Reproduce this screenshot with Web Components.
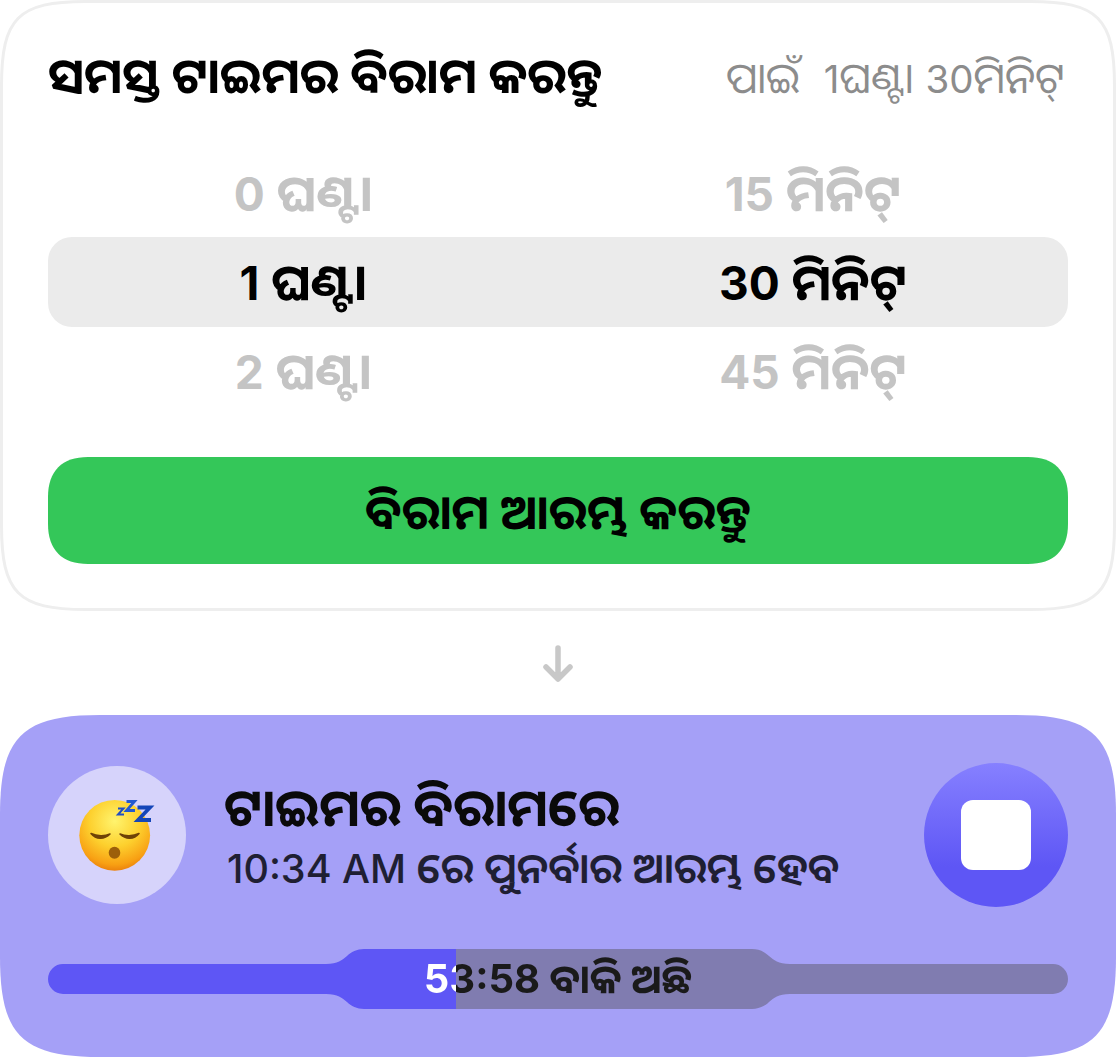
<!DOCTYPE html>
<html lang="or">
<head>
<meta charset="utf-8">
<title>ବିରାମ</title>
<style>
  html, body { margin: 0; background: #fff; }
  body {
    width: 1116px;
    font-family: Inter, "Noto Sans Oriya", "Noto Sans", sans-serif;
    color: #000;
  }
  pause-page { display: block; }
</style>
</head>
<body>
<pause-page></pause-page>

<script>
// one row of the hour / minute picker
class PickerRow extends HTMLElement {
  constructor () {
    super();
    const root = this.attachShadow({ mode: 'open' });
    root.innerHTML = `
    <style>
      :host { display: grid; grid-template-columns: 510px 510px; height: 88px; align-items: center; border-radius: 24px;
        font-size: 50.500px; font-weight: 700; color: #c4c4c4; text-align: center; line-height: 88px; }
      :host([selected]) { background: #ebebeb; color: #000; height: 90px; line-height: 90px; }
    </style>
    <div><slot name="hours"></slot></div>
    <div><slot name="minutes"></slot></div>`;
  }
}
customElements.define('picker-row', PickerRow);

// top card: title, picker and start button
class PauseCard extends HTMLElement {
  constructor () {
    super();
    const root = this.attachShadow({ mode: 'open' });
    root.innerHTML = `
    <style>
      :host { display: block; position: relative; box-sizing: border-box; height: 611px; padding: 44px 48px 0; }
      .edge { position: absolute; inset: 0; display: block; }
      header { position: relative; display: flex; justify-content: space-between; align-items: center; height: 64px; margin-bottom: 41px; }
      h1 { margin: 0; font-size: 49px; font-weight: 700; line-height: 64px; }
      .for { font-size: 42.500px; font-weight: 400; color: #8c8c8c; line-height: 64px; padding: 4px 3px 0 0; white-space: pre; }
      .for b { font-size: 38.500px; font-weight: 400; }
      .wheel { position: relative; display: flex; flex-direction: column; margin-bottom: 42px; }
      .wheel b { font-size: 46px; font-weight: 700; }
      button { position: relative; display: block; width: 1020px; height: 107px; border: 0; background: #34c759; color: #000;
        font: 700 48px Inter, "Noto Sans Oriya", sans-serif; padding: 0;
        clip-path: path('M0 40C0 14 14 0 40 0H980C1006 0 1020 14 1020 40V67C1020 93 1006 107 980 107H40C14 107 0 93 0 67Z'); }
    </style>
    <svg class="edge" width="1116" height="611" viewBox="0 0 1116 611" fill="#fff" stroke="#eeeeee" stroke-width="3">
      <path d="M1.5 86C1.5 18 18 1.500 86 1.500H1030C1098 1.500 1114.500 18 1114.500 86V525C1114.500 593 1098 609.500 1030 609.500H86C18 609.500 1.500 593 1.500 525Z"/>
    </svg>
    <header>
      <h1>ସମସ୍ତ ଟାଇମର ବିରାମ କରନ୍ତୁ</h1>
      <span class="for">ପାଇଁ  <b>1</b>ଘଣ୍ଟା <b>30</b>ମିନିଟ୍</span>
    </header>
    <div class="wheel">
      <picker-row><span slot="hours"><b>0</b> ଘଣ୍ଟା</span><span slot="minutes"><b>15</b> ମିନିଟ୍</span></picker-row>
      <picker-row selected><span slot="hours"><b>1</b> ଘଣ୍ଟା</span><span slot="minutes"><b>30</b> ମିନିଟ୍</span></picker-row>
      <picker-row><span slot="hours"><b>2</b> ଘଣ୍ଟା</span><span slot="minutes"><b>45</b> ମିନିଟ୍</span></picker-row>
    </div>
    <button>ବିରାମ ଆରମ୍ଭ କରନ୍ତୁ</button>`;
  }
}
customElements.define('pause-card', PauseCard);

// the sleeping face, Apple style
class SleepFace extends HTMLElement {
  constructor () {
    super();
    const root = this.attachShadow({ mode: 'open' });
    root.innerHTML = `
    <style>
      :host { display: block; flex: none; width: 138px; height: 138px; border-radius: 50%; background: #d6d3fb; }
      svg { display: block; }
    </style>
    <svg width="138" height="138" viewBox="0 0 138 138" fill="none">
      <defs>
        <radialGradient id="face" cx="0.5" cy="0.3" r="0.72">
          <stop offset="0" stop-color="#fff46e"/>
          <stop offset="0.5" stop-color="#fdd02e"/>
          <stop offset="0.85" stop-color="#f8a013"/>
          <stop offset="1" stop-color="#e97c0c"/>
        </radialGradient>
      </defs>
      <circle cx="66.700" cy="69.300" r="35.400" fill="url(#face)"/>
      <path d="M43 67.500C48 73.500 56 74 62 68C57 70.500 49 70.500 43 67.500Z" fill="#6f4207" stroke="#6f4207" stroke-width="1.600" stroke-linejoin="round"/>
      <path d="M72 68C78 74 86 73.500 91 67.500C85 70.500 77 70.500 72 68Z" fill="#6f4207" stroke="#6f4207" stroke-width="1.600" stroke-linejoin="round"/>
      <ellipse cx="66.500" cy="86.800" rx="5.800" ry="6" fill="#9c5f0a"/>
      <path d="M70 42.500h5.500l-5.500 6h6" stroke="#1f4fc4" stroke-width="2"/>
      <path d="M78.500 35.500h8l-8 9h8.500" stroke="#2258cf" stroke-width="2.800"/>
      <path d="M89.500 41.500h12.500l-12 12.500h13" stroke="#1546b8" stroke-width="3.800"/>
    </svg>`;
  }
}
customElements.define('sleep-face', SleepFace);

class StopButton extends HTMLElement {
  constructor () {
    super();
    const root = this.attachShadow({ mode: 'open' });
    root.innerHTML = `
    <style>
      :host { display: flex; align-items: center; justify-content: center; flex: none; width: 144px; height: 144px; border-radius: 50%;
        background: linear-gradient(180deg, #8680ff 0%, #5e56f5 72%); }
      i { display: block; width: 70px; height: 70px; border-radius: 12px; background: #fff; }
    </style>
    <i></i>`;
  }
}
customElements.define('stop-button', StopButton);

// progress track with the bulge that holds the countdown
class CountdownBar extends HTMLElement {
  constructor () {
    super();
    const root = this.attachShadow({ mode: 'open' });
    root.innerHTML = `
    <style>
      :host { display: block; position: relative; height: 60px; }
      svg { position: absolute; inset: 0; display: block; }
      .label { position: relative; text-align: center; height: 60px; line-height: 60px; font-size: 40px; font-weight: 700; color: transparent;
        -webkit-background-clip: text; background-clip: text;
        background-image: linear-gradient(90deg, #fff 408px, #1a1a1a 408px); }
    </style>
    <svg width="1020" height="60" viewBox="0 0 1020 60">
      <defs>
        <clipPath id="shape">
          <path d="M15 15H278C290 15 294 11 299 7C303 3 309 0 316 0H704C711 0 717 3 721 7C726 11 730 15 742 15H1005A15 15 0 0 1 1005 45H742C730 45 726 49 721 53C717 57 711 60 704 60H316C309 60 303 57 299 53C294 49 290 45 278 45H15A15 15 0 0 1 15 15Z"/>
        </clipPath>
      </defs>
      <g clip-path="url(#shape)">
        <rect width="408" height="60" fill="#5e56f5"/>
        <rect x="408" width="612" height="60" fill="#807cb0"/>
      </g>
    </svg>
    <div class="label"><slot></slot></div>`;
  }
}
customElements.define('countdown-bar', CountdownBar);

// purple live activity at the bottom
class PausedBanner extends HTMLElement {
  constructor () {
    super();
    const root = this.attachShadow({ mode: 'open' });
    root.innerHTML = `
    <style>
      :host { display: block; box-sizing: border-box; height: 342px; padding: 48px 48px 0; background: #a5a0f7;
        clip-path: path('M0 100C0 22 22 0 100 0H1016C1094 0 1116 22 1116 100V242C1116 320 1094 342 1016 342H100C22 342 0 320 0 242Z'); }
      .top { display: flex; align-items: center; height: 144px; margin-bottom: 42px; }
      .txt { flex: 1; padding: 2px 0 0 38px; }
      h2 { margin: 0; font-size: 52px; font-weight: 700; line-height: 62px; color: #0a0a0a; }
      p { margin: 2px 0 0 3px; font-size: 42.200px; font-weight: 600; line-height: 54px; color: #1f1f33; }
      p b { font-size: 39.500px; font-weight: 500; }
    </style>
    <div class="top">
      <sleep-face></sleep-face>
      <div class="txt">
        <h2>ଟାଇମର ବିରାମରେ</h2>
        <p><b>10:34 AM</b> ରେ ପୁନର୍ବାର ଆରମ୍ଭ ହେବ</p>
      </div>
      <stop-button></stop-button>
    </div>
    <countdown-bar>53:58 ବାକି ଅଛି</countdown-bar>`;
  }
}
customElements.define('paused-banner', PausedBanner);

class PausePage extends HTMLElement {
  constructor () {
    super();
    const root = this.attachShadow({ mode: 'open' });
    root.innerHTML = `
    <style>
      :host { display: block; }
      .arrow { display: flex; justify-content: center; align-items: center; height: 104px; }
      svg { display: block; margin-top: 2px; }
    </style>
    <pause-card></pause-card>
    <div class="arrow">
      <svg width="32" height="38" viewBox="0 0 32 38" fill="none" stroke="#c8c8c8" stroke-width="5.500" stroke-linecap="round" stroke-linejoin="round">
        <path d="M16 3V34M4 22L16 34L28 22"/>
      </svg>
    </div>
    <paused-banner></paused-banner>`;
  }
}
customElements.define('pause-page', PausePage);
</script>
</body>
</html>
